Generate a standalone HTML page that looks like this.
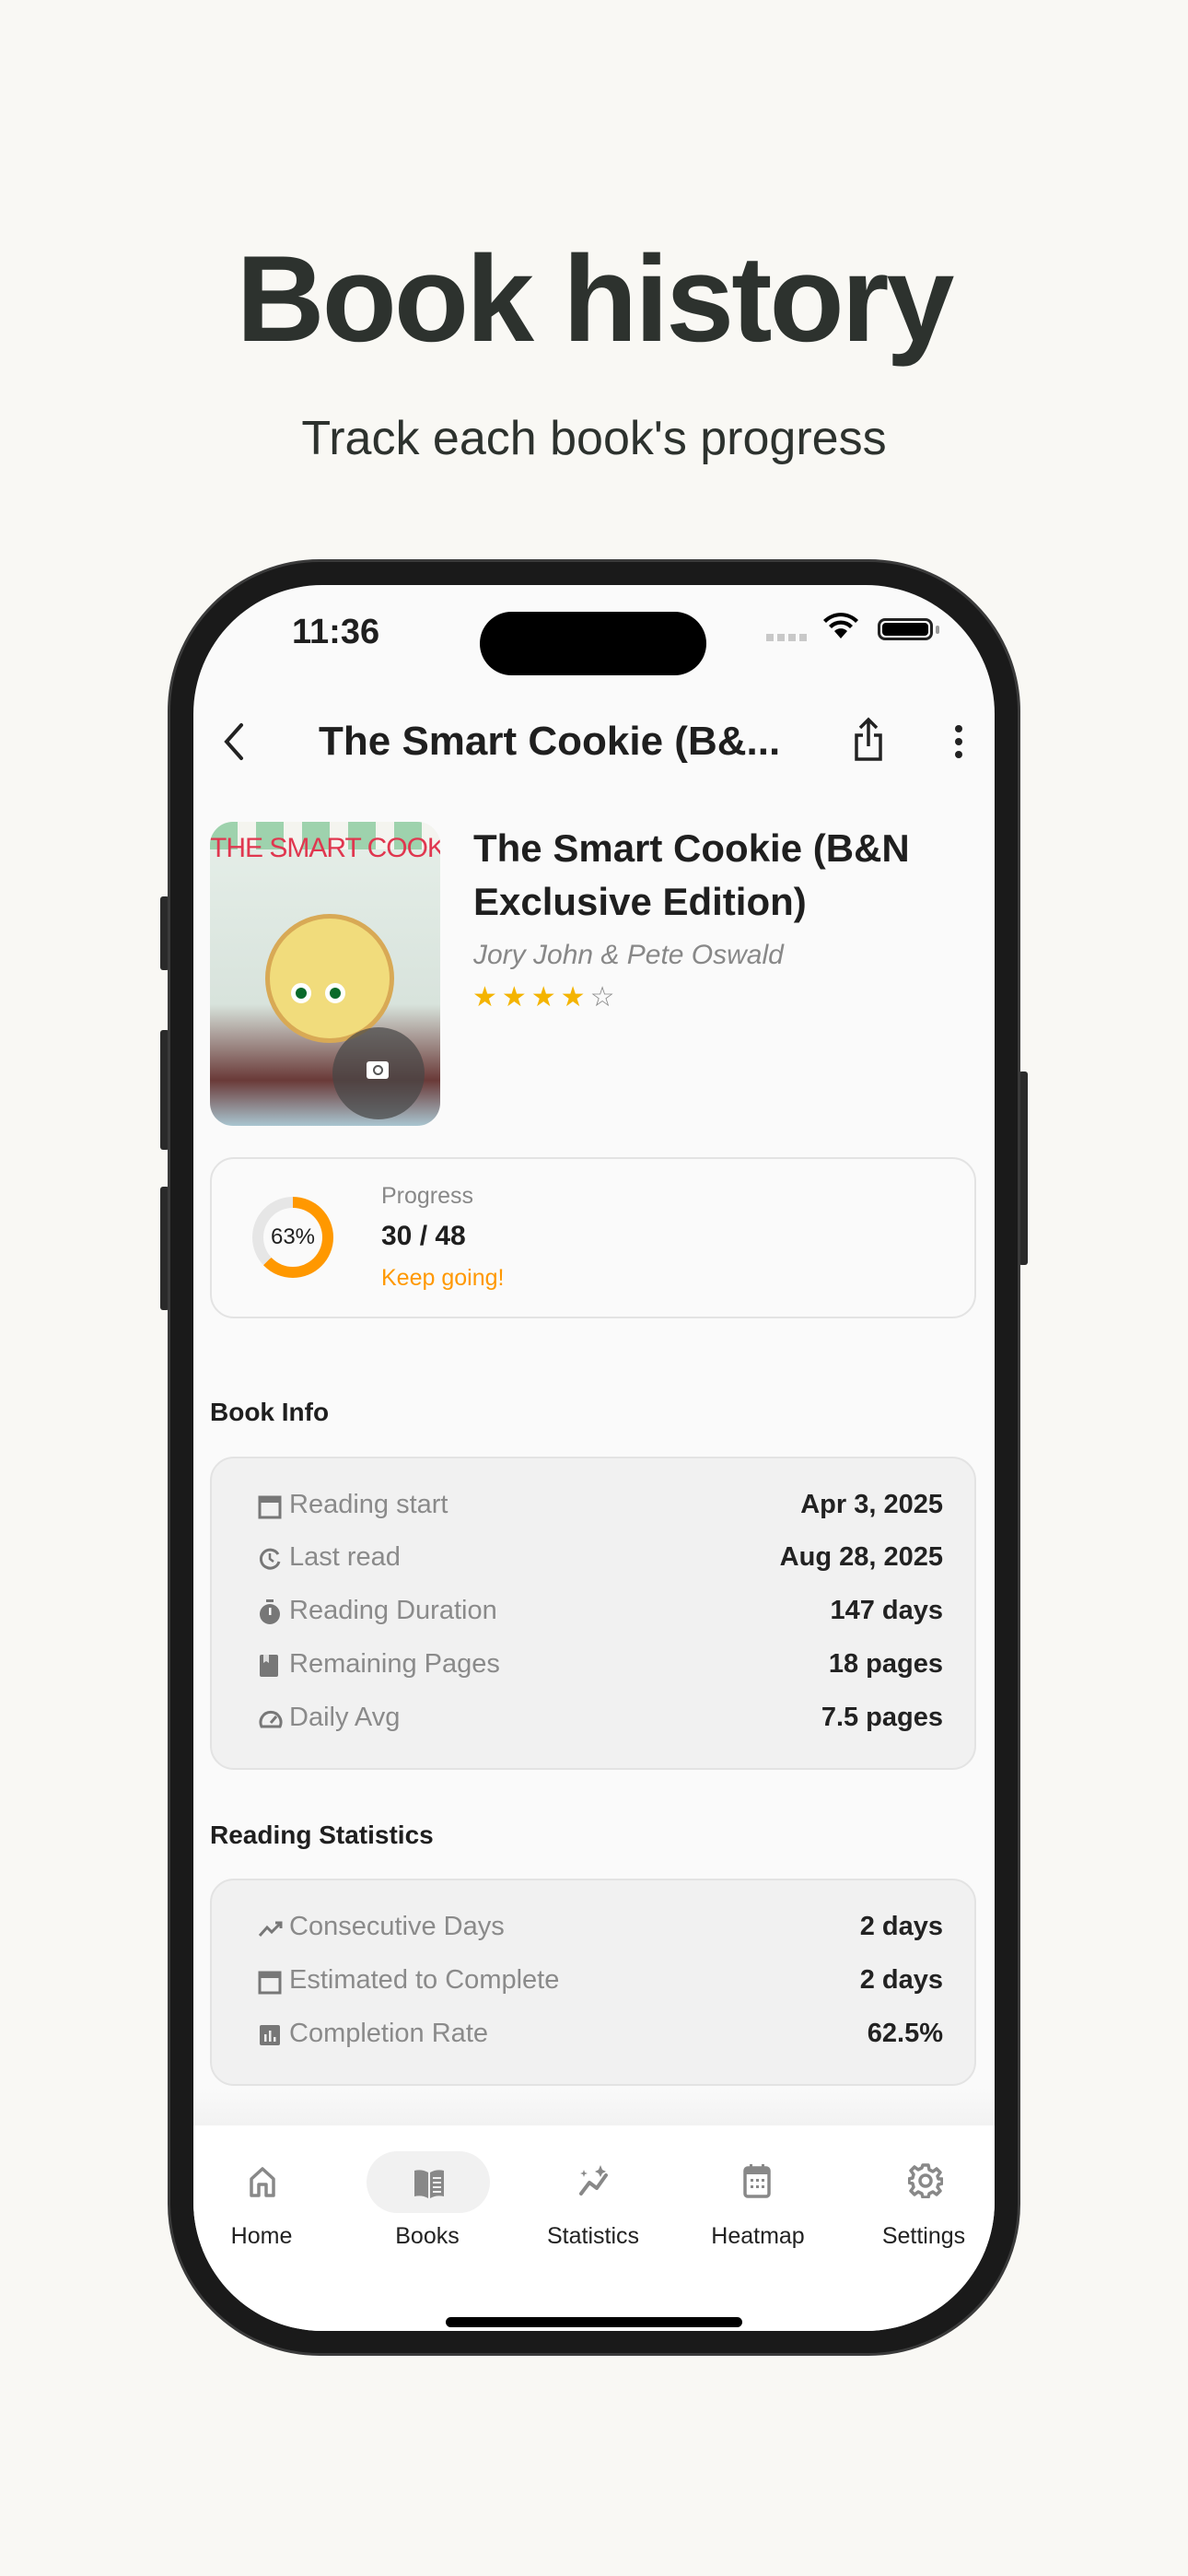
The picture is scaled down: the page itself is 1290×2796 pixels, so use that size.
<!DOCTYPE html>
<html><head><meta charset="utf-8">
<style>
*{margin:0;padding:0;box-sizing:border-box}
body{width:1290px;height:2796px;background:#f9f8f4;font-family:"Liberation Sans",sans-serif;position:relative;overflow:hidden}
.a{position:absolute}
.h1{left:0;width:1290px;text-align:center;top:249px;font-size:133px;font-weight:bold;color:#2d322e;letter-spacing:-3px}
.sub{left:0;width:1290px;text-align:center;top:446px;font-size:52px;color:#2d322e}
.phone{left:182px;top:607px;width:926px;height:1950px;border-radius:165px;background:#1a1a1a;border:3px solid #3a3a3a}
.screen{left:210px;top:635px;width:870px;height:1895px;border-radius:140px;background:#fafafa;overflow:hidden}
.btn{background:#2a2a2a;border-radius:3px}
.t{color:#1f1f1f}
.row{position:absolute;left:0;width:870px;height:40px}
.row .ic{position:absolute;left:70px;top:4px}
.row .l{position:absolute;left:104px;top:0px;font-size:29px;color:#8a8a8a}
.row .v{position:absolute;right:56px;top:0px;font-size:29px;font-weight:bold;color:#222}
.nav{position:absolute;top:1778px;width:180px;text-align:center;font-size:25px;color:#222}
</style></head><body>
<div class="a h1">Book history</div>
<div class="a sub">Track each book's progress</div>

<div class="a btn" style="left:174px;top:973px;width:10px;height:80px"></div>
<div class="a btn" style="left:174px;top:1118px;width:10px;height:130px"></div>
<div class="a btn" style="left:174px;top:1288px;width:10px;height:134px"></div>
<div class="a btn" style="left:1106px;top:1163px;width:10px;height:210px"></div>
<div class="a phone"></div>
<div class="a screen">
  <div class="a t" style="left:107px;top:30px;font-size:38px;font-weight:bold">11:36</div>
  <div class="a" style="left:311px;top:29px;width:246px;height:69px;border-radius:35px;background:#000"></div>
  <div class="a" style="left:622px;top:53px;width:46px;height:8px;background:repeating-linear-gradient(90deg,#c8c8c8 0 8px,transparent 8px 12px)"></div>
  <svg class="a" style="left:683px;top:30px" width="40" height="30" viewBox="0 0 40 30"><path d="M20 28 L13 20 A10 10 0 0 1 27 20Z M7 14 A18 18 0 0 1 33 14 L30 17 A14 14 0 0 0 10 17Z M1 8 A27 27 0 0 1 39 8 L36 11 A22 22 0 0 0 4 11Z" fill="#000"/></svg>
  <div class="a" style="left:743px;top:36px;width:60px;height:24px;border:3px solid #222;border-radius:8px;padding:2px"><div style="width:100%;height:100%;background:#000;border-radius:4px"></div></div>
  <div class="a" style="left:806px;top:44px;width:4px;height:9px;background:#999;border-radius:2px"></div>

  <svg class="a" style="left:30px;top:148px" width="30" height="44" viewBox="0 0 30 44"><path d="M22 4 L6 22 L22 40" fill="none" stroke="#222" stroke-width="4" stroke-linecap="round"/></svg>
  <div class="a t" style="left:136px;top:145px;font-size:44px;font-weight:bold">The Smart Cookie (B&amp;...</div>
  <svg class="a" style="left:716px;top:143px" width="34" height="50" viewBox="0 0 34 50"><path d="M17 3 V32 M8 12 L17 3 L26 12 M11 20 H4 V46 H30 V20 H23" fill="none" stroke="#222" stroke-width="3.5"/></svg>
  <div class="a" style="left:827px;top:152px;width:8px;height:8px;border-radius:4px;background:#222;box-shadow:0 14px 0 #222,0 28px 0 #222"></div>

  <div class="a" style="left:18px;top:257px;width:250px;height:330px;border-radius:25px;overflow:hidden;background:linear-gradient(#e6efe9,#d8e3dc 60%,#6a3a38 85%,#a9c5d0)">
    <div class="a" style="left:0;top:0;width:250px;height:30px;background:repeating-linear-gradient(90deg,#9ed2ad 0 30px,#f4f4ef 30px 50px)"></div>
    <div class="a" style="left:0;top:12px;width:250px;font-size:30px;color:#e0374f;font-family:'Liberation Sans Narrow','Liberation Sans',sans-serif;white-space:nowrap;letter-spacing:-1px">THE SMART COOKIE</div>
    <div class="a" style="left:60px;top:100px;width:140px;height:140px;border-radius:70px;background:#f1dc7c;border:5px solid #d8a955"></div>
    <div class="a" style="left:88px;top:175px;width:22px;height:22px;border-radius:11px;background:#0a6a2a;border:5px solid #fff"></div>
    <div class="a" style="left:125px;top:175px;width:22px;height:22px;border-radius:11px;background:#0a6a2a;border:5px solid #fff"></div>
    <div class="a" style="left:133px;top:223px;width:100px;height:100px;border-radius:50px;background:rgba(70,70,70,.7)"></div>
    <div class="a" style="left:170px;top:260px;width:24px;height:19px;border-radius:3px;background:#fff"><div style="margin:4px auto;width:11px;height:11px;border-radius:6px;border:2px solid #555"></div></div>
  </div>
  <div class="a t" style="left:304px;top:257px;font-size:42px;font-weight:bold;line-height:58px;width:540px">The Smart Cookie (B&amp;N Exclusive Edition)</div>
  <div class="a" style="left:304px;top:385px;font-size:30px;color:#888;font-style:italic">Jory John &amp; Pete Oswald</div>
  <div class="a" style="left:303px;top:430px;font-size:30px;color:#f4b400;letter-spacing:5px">★★★★<span style="color:#888">☆</span></div>

  <div class="a" style="left:18px;top:621px;width:832px;height:175px;border:2px solid #e3e3e3;border-radius:26px"></div>
  <div class="a" style="left:64px;top:664px;width:88px;height:88px;border-radius:44px;background:conic-gradient(#ff9800 0 63%,#e6e6e6 63% 100%)"><div style="margin:12px;width:64px;height:64px;border-radius:32px;background:#fafafa"></div></div>
  <div class="a t" style="left:64px;top:694px;width:88px;text-align:center;font-size:24px">63%</div>
  <div class="a" style="left:204px;top:649px;font-size:25px;color:#888">Progress</div>
  <div class="a t" style="left:204px;top:690px;font-size:30px;font-weight:bold">30 / 48</div>
  <div class="a" style="left:204px;top:738px;font-size:25px;color:#ff9800">Keep going!</div>

  <div class="a t" style="left:18px;top:882px;font-size:28px;font-weight:bold">Book Info</div>
  <div class="a" style="left:18px;top:946px;width:832px;height:340px;background:#f1f1f1;border:2px solid #e3e3e3;border-radius:26px"></div>
   <div class="row" style="top:982px"><svg class="ic" width="26" height="28"><rect x="2" y="4" width="22" height="22" fill="none" stroke="#777" stroke-width="3"/><rect x="2" y="4" width="22" height="6" fill="#777"/></svg><span class="l">Reading start</span><span class="v">Apr 3, 2025</span></div>
   <div class="row" style="top:1039px"><svg class="ic" width="26" height="28"><path d="M22 9 A10 10 0 1 0 23 17" fill="none" stroke="#777" stroke-width="3"/><path d="M13 8 V14 L17 17" fill="none" stroke="#777" stroke-width="2.5"/></svg><span class="l">Last read</span><span class="v">Aug 28, 2025</span></div>
   <div class="row" style="top:1097px"><svg class="ic" width="26" height="28"><circle cx="13" cy="16" r="11" fill="#777"/><rect x="9" y="0" width="8" height="3" fill="#777"/><rect x="12" y="9" width="2.5" height="8" fill="#fff"/></svg><span class="l">Reading Duration</span><span class="v">147 days</span></div>
   <div class="row" style="top:1155px"><svg class="ic" width="26" height="28"><rect x="2" y="2" width="20" height="24" rx="2" fill="#777"/><path d="M6 2 V11 L9 9 L12 11 V2" fill="#ddd"/></svg><span class="l">Remaining Pages</span><span class="v">18 pages</span></div>
   <div class="row" style="top:1213px"><svg class="ic" width="28" height="28"><path d="M4 22 A11 11 0 1 1 24 22 Z" fill="none" stroke="#777" stroke-width="3"/><path d="M14 18 L20 11" stroke="#777" stroke-width="3"/></svg><span class="l">Daily Avg</span><span class="v">7.5 pages</span></div>

  <div class="a t" style="left:18px;top:1341px;font-size:28px;font-weight:bold">Reading Statistics</div>
  <div class="a" style="left:18px;top:1404px;width:832px;height:225px;background:#f1f1f1;border:2px solid #e3e3e3;border-radius:26px"></div>
  <div class="row" style="top:1440px"><svg class="ic" width="28" height="28"><path d="M2 22 L10 13 L15 18 L25 8 M19 8 H25 V14" fill="none" stroke="#777" stroke-width="3"/></svg><span class="l">Consecutive Days</span><span class="v">2 days</span></div>
  <div class="row" style="top:1498px"><svg class="ic" width="26" height="28"><rect x="2" y="4" width="22" height="22" fill="none" stroke="#777" stroke-width="3"/><rect x="2" y="4" width="22" height="6" fill="#777"/></svg><span class="l">Estimated to Complete</span><span class="v">2 days</span></div>
  <div class="row" style="top:1556px"><svg class="ic" width="26" height="28"><rect x="2" y="3" width="22" height="22" rx="2" fill="#777"/><rect x="7" y="13" width="2.5" height="8" fill="#eee"/><rect x="12" y="9" width="2.5" height="12" fill="#eee"/><rect x="17" y="16" width="2.5" height="5" fill="#eee"/></svg><span class="l">Completion Rate</span><span class="v">62.5%</span></div>

  <div class="a" style="left:0;top:1630px;width:870px;height:42px;background:linear-gradient(#fafafa,#f2f2f2)"></div>
  <div class="a" style="left:0;top:1672px;width:870px;height:230px;background:#fff"></div>
  <div class="a" style="left:188px;top:1700px;width:134px;height:67px;border-radius:34px;background:#f1f1f1"></div>
  <svg class="a" style="left:60px;top:1716px" width="30" height="34" viewBox="0 0 30 34"><path d="M3 32 V14 L15 3 L27 14 V32 H19 V20 H11 V32 Z" fill="none" stroke="#888" stroke-width="3.5" stroke-linejoin="round"/></svg>
  <svg class="a" style="left:238px;top:1718px" width="36" height="34" viewBox="0 0 36 34"><path d="M2 3 Q10 1 17 5 V33 Q10 29 2 31Z M34 3 Q26 1 19 5 V33 Q26 29 34 31Z" fill="#888"/><path d="M22 11 H31 M22 16 H31 M22 21 H31 M22 26 H31" stroke="#fff" stroke-width="1.8"/></svg>
  <svg class="a" style="left:418px;top:1714px" width="36" height="36" viewBox="0 0 36 36"><path d="M3 32 L12 20 L20 26 L30 12" fill="none" stroke="#888" stroke-width="4" stroke-linecap="round" stroke-linejoin="round"/><path d="M24 1 L26 6 L30 8 L26 10 L24 14 L22 10 L18 8 L22 6Z M6 6 L7 9 L10 10 L7 11 L6 14 L5 11 L2 10 L5 9Z" fill="#888"/></svg>
  <svg class="a" style="left:597px;top:1713px" width="30" height="38" viewBox="0 0 30 38"><rect x="2" y="5" width="26" height="31" rx="3" fill="none" stroke="#888" stroke-width="3.5"/><rect x="2" y="5" width="26" height="7" fill="#888"/><rect x="7" y="1" width="3" height="6" fill="#888"/><rect x="20" y="1" width="3" height="6" fill="#888"/><g fill="#888"><rect x="8" y="17" width="3" height="3"/><rect x="14" y="17" width="3" height="3"/><rect x="20" y="17" width="3" height="3"/><rect x="8" y="24" width="3" height="3"/><rect x="14" y="24" width="3" height="3"/><rect x="20" y="24" width="3" height="3"/></g></svg>
  <svg class="a" style="left:776px;top:1713px" width="38" height="38" viewBox="0 0 38 38"><g fill="none" stroke="#888" stroke-width="3.5"><circle cx="19" cy="19" r="6"/><path d="M16 2 H22 L23 7 L27 9 L31 6 L35 10 L32 14 L33 17 L37 17 V22 L33 23 L32 26 L35 30 L31 34 L27 31 L23 33 L22 37 H16 L15 33 L11 31 L7 34 L3 30 L6 26 L5 22 L1 21 V17 L5 16 L6 12 L3 8 L7 4 L11 7 L15 5Z" stroke-linejoin="round"/></g></svg>
  <div class="nav" style="left:-16px">Home</div>
  <div class="nav" style="left:164px">Books</div>
  <div class="nav" style="left:344px">Statistics</div>
  <div class="nav" style="left:523px">Heatmap</div>
  <div class="nav" style="left:703px">Settings</div>
  <div class="a" style="left:274px;top:1880px;width:322px;height:11px;border-radius:6px;background:#000"></div>
</div>
</body></html>
